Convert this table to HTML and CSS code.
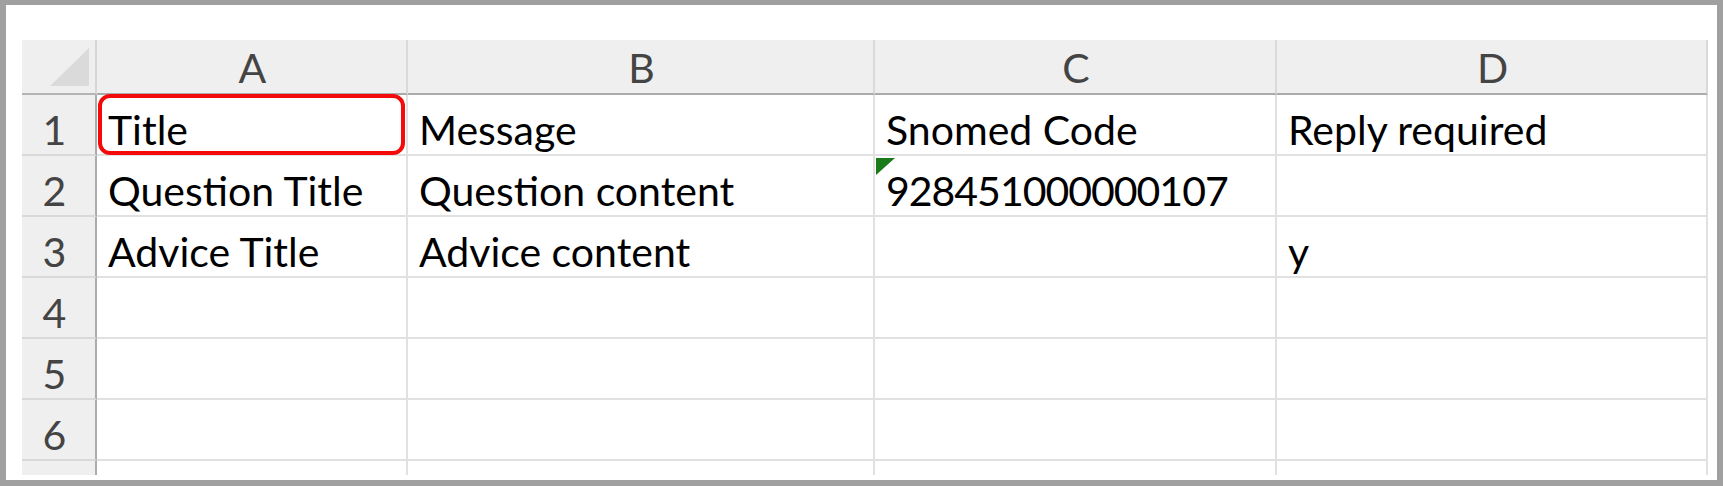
FILE: index.html
```html
<!DOCTYPE html>
<html lang="en">
<head>
<meta charset="utf-8">
<title>Sheet</title>
<link rel="stylesheet" href="styles.css">
</head>
<body>
<div class="frame">
  <div class="sheet">
    <div class="corner"><div class="corner-tri"></div></div>
    <div class="colhead">A</div>
    <div class="colhead">B</div>
    <div class="colhead">C</div>
    <div class="colhead">D</div>

    <div class="rowhead">1</div>
    <div class="cell sel">Title<span class="sel-ring"></span></div>
    <div class="cell">Message</div>
    <div class="cell">Snomed Code</div>
    <div class="cell">Reply required</div>

    <div class="rowhead">2</div>
    <div class="cell">Question Title</div>
    <div class="cell">Question content</div>
    <div class="cell number"><span class="flag"></span>928451000000107</div>
    <div class="cell"></div>

    <div class="rowhead">3</div>
    <div class="cell">Advice Title</div>
    <div class="cell">Advice content</div>
    <div class="cell"></div>
    <div class="cell">y</div>

    <div class="rowhead">4</div>
    <div class="cell"></div><div class="cell"></div><div class="cell"></div><div class="cell"></div>

    <div class="rowhead">5</div>
    <div class="cell"></div><div class="cell"></div><div class="cell"></div><div class="cell"></div>

    <div class="rowhead">6</div>
    <div class="cell"></div><div class="cell"></div><div class="cell"></div><div class="cell"></div>

    <div class="rowhead">7</div>
    <div class="cell"></div><div class="cell"></div><div class="cell"></div><div class="cell"></div>
  </div>
</div>
</body>
</html>
```

FILE: styles.css
```css
* { box-sizing: border-box; }

html, body {
  margin: 0;
  padding: 0;
  background: #ffffff;
}

.frame {
  width: 1723px;
  height: 486px;
  border-style: solid;
  border-color: #a0a0a0;
  border-width: 5px 6px 6px 6px;
  padding: 35px 9px 5px 16px;
  background: #ffffff;
}

.sheet {
  height: 435px;
  overflow: hidden;
  display: grid;
  grid-template-columns: 75px 311px 467px 402px 431px;
  grid-template-rows: 55px repeat(7, 61px);
  font-family: Lato, "Liberation Sans", sans-serif;
  font-size: 41px;
  line-height: 1;
}

.corner {
  background: #efefef;
  border-right: 2px solid #d6d6d6;
  border-bottom: 2px solid #b4b4b4;
  display: flex;
  justify-content: flex-end;
  align-items: flex-end;
  padding: 0 6px 7px 0;
}

.corner-tri {
  width: 39px;
  height: 38px;
  background: #dadada;
  clip-path: polygon(100% 0, 100% 100%, 0 100%);
}

.colhead {
  background: #efefef;
  color: #444444;
  border-right: 2px solid #d9d9d9;
  border-bottom: 2px solid #ababab;
  display: flex;
  justify-content: center;
  align-items: flex-end;
  padding: 0 0 5px 2px;
}

.rowhead {
  background: #efefef;
  color: #444444;
  border-right: 2px solid #ababab;
  border-bottom: 2px solid #d9d9d9;
  display: flex;
  justify-content: center;
  align-items: flex-end;
  padding: 0 8px 4px 0;
}

.cell {
  position: relative;
  background: #ffffff;
  color: #000000;
  border-right: 2px solid #e1e1e1;
  border-bottom: 2px solid #e1e1e1;
  display: flex;
  align-items: flex-end;
  padding: 0 0 4px 11px;
  white-space: nowrap;
}

.number {
  letter-spacing: -1px;
}

.sel-ring {
  position: absolute;
  left: 1px;
  top: -1px;
  right: 1px;
  bottom: -1px;
  border: 4px solid #f50a0a;
  border-radius: 12px;
}

.flag {
  position: absolute;
  left: 1px;
  top: 2px;
  width: 19px;
  height: 17px;
  background: #1a7a1a;
  clip-path: polygon(0 0, 100% 0, 0 100%);
}
```
